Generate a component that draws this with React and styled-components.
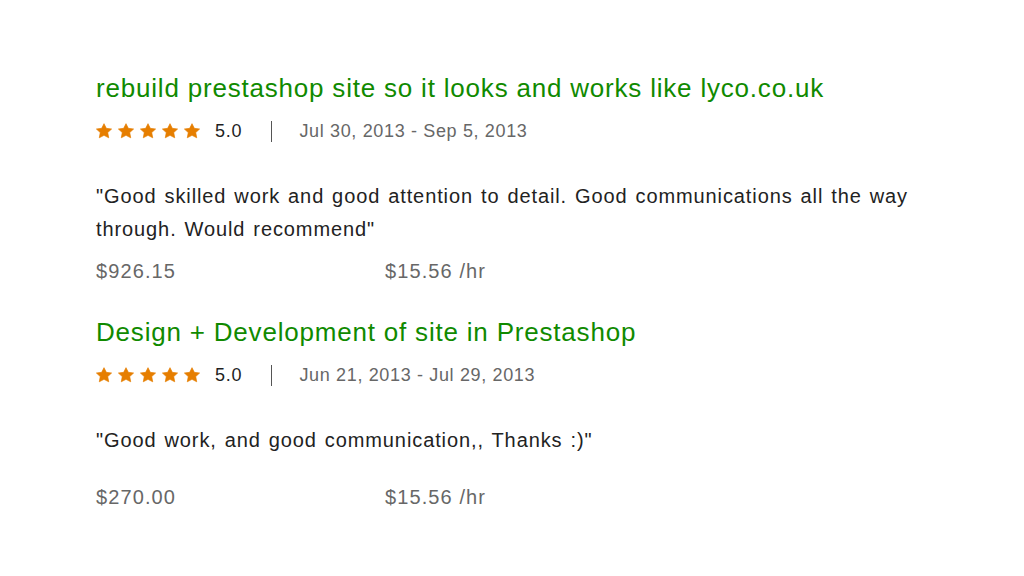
import React from "react";
import styled, { createGlobalStyle } from "styled-components";

const Global = createGlobalStyle`
  html, body { margin: 0; padding: 0; background: #fff; }
  body { font-family: "Liberation Sans", Arial, sans-serif; -webkit-font-smoothing: antialiased; }
`;

const Page = styled.div`
  width: 1024px;
  height: 576px;
  box-sizing: border-box;
  padding: 70px 96px 0;
  display: flex;
  flex-direction: column;
`;

const Item = styled.section`
  display: flex;
  flex-direction: column;
  margin-bottom: ${(p) => p.$after}px;
`;

const Title = styled.h3`
  margin: 0;
  font-size: 26px;
  line-height: 36px;
  font-weight: 400;
  color: #108a00;
  letter-spacing: 0.8px;
`;

const MetaRow = styled.div`
  display: flex;
  align-items: center;
  height: 30px;
  margin-top: 10px;
`;

const Stars = styled.div`
  display: flex;
  gap: 6px;
`;

const Rating = styled.span`
  margin-left: 15px;
  font-size: 18px;
  letter-spacing: 0.8px;
  color: #1f1f1f;
`;

const Divider = styled.span`
  width: 1px;
  height: 21px;
  background: #555;
  margin: 0 27px 0 29px;
`;

const DateRange = styled.span`
  font-size: 18px;
  letter-spacing: 0.65px;
  color: #676767;
`;

const Quote = styled.p`
  margin: 34px 0 0;
  font-size: 20px;
  line-height: 33px;
  letter-spacing: 0.9px;
  word-spacing: 1.5px;
  color: #222;
  max-width: 840px;
`;

const Prices = styled.div`
  display: grid;
  grid-template-columns: 289px auto;
  margin-top: ${(p) => p.$top}px;
  font-size: 20px;
  line-height: 26px;
  letter-spacing: 1.1px;
  color: #676767;
`;

const Star = () => (
  <svg width="16" height="16" viewBox="0 0 24 23">
    <path
      d="M12 0.5l3.5 7 7.9 1-5.8 5.4 1.5 7.8L12 18 4.9 21.7l1.5-7.8L0.6 8.5l7.9-1z"
      fill="#e67e00"
      stroke="#e67e00"
      strokeWidth="1"
      strokeLinejoin="round"
    />
  </svg>
);

const reviews = [
  {
    title: "rebuild prestashop site so it looks and works like lyco.co.uk",
    rating: "5.0",
    dates: "Jul 30, 2013 - Sep 5, 2013",
    quote:
      '"Good skilled work and good attention to detail. Good communications all the way through. Would recommend"',
    total: "$926.15",
    rate: "$15.56 /hr",
    priceTop: 12,
    after: 30,
  },
  {
    title: "Design + Development of site in Prestashop",
    rating: "5.0",
    dates: "Jun 21, 2013 - Jul 29, 2013",
    quote: '"Good work, and good communication,, Thanks :)"',
    total: "$270.00",
    rate: "$15.56 /hr",
    priceTop: 27,
    after: 0,
  },
];

export default function App() {
  return (
    <>
      <Global />
      <Page>
        {reviews.map((r, i) => (
          <Item key={i} $after={r.after}>
            <Title>{r.title}</Title>
            <MetaRow>
              <Stars>
                {[0, 1, 2, 3, 4].map((k) => (
                  <Star key={k} />
                ))}
              </Stars>
              <Rating>{r.rating}</Rating>
              <Divider />
              <DateRange>{r.dates}</DateRange>
            </MetaRow>
            <Quote>{r.quote}</Quote>
            <Prices $top={r.priceTop}>
              <span>{r.total}</span>
              <span>{r.rate}</span>
            </Prices>
          </Item>
        ))}
      </Page>
    </>
  );
}
